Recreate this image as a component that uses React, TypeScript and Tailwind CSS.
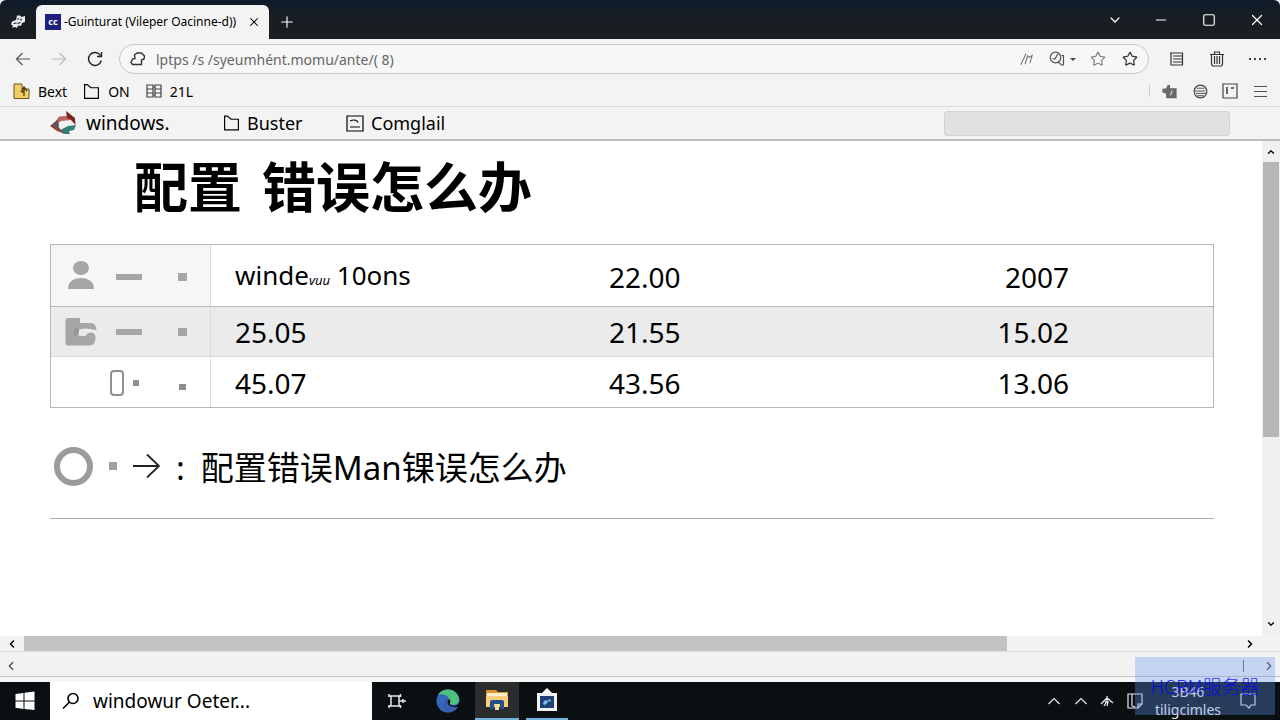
import type { ReactNode } from "react"
import { ChevronDown, ChevronLeft, ChevronRight, ChevronUp, Minus, Plus, Square, Star, X } from "lucide-react"

type GlyphProps = { className: string; box?: string; children: ReactNode }

function Glyph({ className, box = "0 0 16 16", children }: GlyphProps) {
  return (
    <svg className={className} viewBox={box} fill="none" stroke="currentColor" strokeWidth="1.2" aria-hidden="true">
      {children}
    </svg>
  )
}

function FolderOutline({ className }: { className: string }) {
  return (
    <Glyph className={className}>
      <path d="M1.500 14.500V1.500H4l3.500 3h7v10z" strokeWidth="1.100" />
    </Glyph>
  )
}

function TitleBar() {
  return (
    <header className="flex h-[39px] shrink-0 items-end rounded-t-md bg-gradient-to-b from-[#0d1a2a] via-[#1a1e24] to-[#1a1e23] text-white">
      <button className="flex h-[35px] w-9 items-center justify-center" aria-label="Tab actions">
        <svg className="h-4 w-4" viewBox="0 0 16 16" aria-hidden="true">
          <path d="M7 1.500h3l1.500 1.500L15 2v6l-3 1-1 3-3-.5-1 2.500-2-1-3 .5 1-2-2-1 1-3 4-1.500z" fill="#e8eaec" />
          <path d="M7 5h2M11 4.500v2M3.500 9.500l3-.5M7.500 9.500l3-1" stroke="#1a1e24" strokeWidth="1.200" />
        </svg>
      </button>
      <div className="flex h-[34px] w-[233px] items-center rounded-t-md bg-[#f3f3f3] pl-[9px] pr-2 text-black">
        <span className="flex h-4 w-4 shrink-0 items-center justify-center bg-[#1d1f7c] text-[9px] font-bold text-white">cc</span>
        <span className="ml-[3px] flex-1 whitespace-nowrap text-[12px]">-Guinturat (Vileper Oacinne-d))</span>
        <button aria-label="Close tab" className="flex w-[14px] justify-center">
          <X className="h-[14px] w-[14px]" strokeWidth={1.8} />
        </button>
      </div>
      <button aria-label="New tab" className="flex h-[35px] w-9 items-center justify-center">
        <Plus className="h-[18px] w-[18px]" strokeWidth={1.5} />
      </button>
      <div className="ml-auto flex h-[39px] items-center">
        <button aria-label="Search tabs" className="flex w-[46px] justify-center">
          <ChevronDown className="h-4 w-4" strokeWidth={1.8} />
        </button>
        <button aria-label="Minimize" className="flex w-[46px] justify-center">
          <Minus className="h-4 w-4" strokeWidth={1.8} />
        </button>
        <button aria-label="Maximize" className="flex w-[50px] justify-center">
          <Square className="h-[14px] w-[14px]" strokeWidth={2} />
        </button>
        <button aria-label="Close" className="flex w-[46px] justify-center">
          <X className="h-[18px] w-[18px]" strokeWidth={1.6} />
        </button>
      </div>
    </header>
  )
}

function AddressBar() {
  return (
    <div className="flex h-10 shrink-0 items-center pl-3 pr-[14px] text-[#333]">
      <button aria-label="Back" className="flex w-[22px] justify-center text-[#555]">
        <Glyph className="h-4 w-4">
          <path d="M15 8H1.500M7.500 2L1.500 8l6 6" />
        </Glyph>
      </button>
      <button aria-label="Forward" className="ml-[14px] flex w-[22px] justify-center text-[#bbb]">
        <Glyph className="h-4 w-4">
          <path d="M1 8h13.500M8.500 2l6 6-6 6" />
        </Glyph>
      </button>
      <button aria-label="Reload" className="ml-[14px] flex w-[22px] justify-center text-[#222]">
        <Glyph className="h-4 w-4">
          <path d="M13.500 4.500A6.500 6.500 0 1 0 14.300 9.500M14.500 1v4.500H10" strokeWidth="1.400" />
        </Glyph>
      </button>
      <div className="ml-[13px] flex h-[30px] flex-1 items-center rounded-full border border-[#c4c8c6] bg-[#f7f7f7] px-[10px]">
        <Glyph className="h-4 w-4 shrink-0">
          <path d="M2.500 8L5 7.500 4.500 4 7 2h4.500L14.500 5l-.5 3-2.500 1v4.500H2.500L1 11.500z" strokeWidth="1.400" />
        </Glyph>
        <input
          aria-label="Address"
          className="ml-[10px] w-0 flex-1 bg-transparent text-[14px] text-[#666] outline-none"
          defaultValue="lptps /s /syeumhént.momu/ante/( 8)"
        />
        <div className="flex items-center text-[#777]">
          <button aria-label="Read aloud" className="mr-4">
            <Glyph className="h-[14px] w-[14px]">
              <path d="M2 14.500L8 2M7 14L10 3.500M9.500 4l2 2L15 4l-2.500 9" />
            </Glyph>
          </button>
          <button aria-label="Zoom options" className="mr-[14px] flex items-center text-[#555]">
            <Glyph className="h-4 w-4">
              <circle cx="6.500" cy="6.500" r="5.300" />
              <path d="M3.500 7.500L6 8l3-5.500M12.500 4.500h2V14h-2L9 11" />
            </Glyph>
            <span className="ml-[5px] border-x-3 border-t-3 border-x-transparent border-t-[#444]" />
          </button>
          <button aria-label="Favorites list" className="mr-4">
            <Star className="h-4 w-4" strokeWidth={1.6} />
          </button>
          <button aria-label="Add to favorites" className="text-[#333]">
            <Star className="h-4 w-4" strokeWidth={1.8} />
          </button>
        </div>
      </div>
      <button aria-label="Reading list" className="ml-5">
        <Glyph className="h-4 w-4">
          <path d="M1 2h13M2 2v12h12M4 5h9M4 8h9M4 11h9M13.500 2v12" />
        </Glyph>
      </button>
      <button aria-label="Delete" className="ml-6">
        <Glyph className="h-4 w-4">
          <path d="M1 3.500h14M5.500 3V1h5v2M2.500 4v9l1 2h9l1-2V4M5.500 5v8M8 5v8M10.500 5v8" />
        </Glyph>
      </button>
      <button aria-label="Settings and more" className="ml-6 flex gap-[3px] py-2">
        {[0, 1, 2, 3].map((i) => (
          <span key={i} className="h-[2px] w-[2px] bg-[#444]" />
        ))}
      </button>
    </div>
  )
}

function BookmarksBar() {
  return (
    <div className="flex h-7 shrink-0 items-center border-b border-[#dcdcdc] pb-[3px] pl-[13px] pr-[13px] text-[14px] text-black">
      <a href="#bext" className="flex items-center">
        <svg className="mr-2 h-[17px] w-[17px]" viewBox="0 0 17 17" aria-hidden="true">
          <path d="M1 1h8v5h7v9.500H1z" fill="#f0cd66" stroke="#6b5620" />
          <path d="M8 9l3-5 3 4M11 4v9M9 9h2" stroke="#4a3a16" strokeWidth="1.300" fill="none" />
        </svg>
        Bext
      </a>
      <a href="#on" className="ml-4 flex items-center">
        <FolderOutline className="mr-2 h-[17px] w-[17px]" />
        ON
      </a>
      <a href="#zll" className="ml-4 flex items-center">
        <Glyph className="mr-2 h-4 w-4">
          <path d="M1 2h6v12H1zM9 2h6v12H9zM1 6h6M1 10h6M9 6h6M9 10h6M7 4h2M7 12h2" stroke="#444" />
        </Glyph>
        21L
      </a>
      <div className="ml-auto flex items-center text-[#444]">
        <span className="mr-3 h-3 w-px bg-[#ccc]" />
        <button aria-label="Extensions">
          <Glyph className="h-[15px] w-[15px]">
            <path d="M6 2l2-.5V5h7v9.500H5V10L1 8.500V5.500l4-.5z" fill="#6a6a6a" stroke="#6a6a6a" />
            <path d="M11 7l-2 5" stroke="#ddd" />
          </Glyph>
        </button>
        <button aria-label="Translate" className="ml-4">
          <Glyph className="h-[15px] w-[15px]">
            <circle cx="8" cy="8" r="6.800" />
            <path d="M4 4.500h8M2 7.500h11M3 10h11M4.500 12.500h7" strokeWidth="1" />
          </Glyph>
        </button>
        <button aria-label="Sidebar" className="ml-[14px]">
          <Glyph className="h-4 w-4">
            <path d="M1 1h14v14H1z" />
            <path d="M5 4v7M9 5h3" strokeWidth="1.600" />
          </Glyph>
        </button>
        <button aria-label="Menu" className="ml-4 flex w-[13px] flex-col gap-1">
          <span className="h-px bg-[#555]" />
          <span className="h-px bg-[#555]" />
          <span className="h-px bg-[#555]" />
        </button>
      </div>
    </div>
  )
}

function SiteNav() {
  return (
    <nav className="flex h-[34px] shrink-0 items-center border-b-2 border-[#bdbdbd] bg-[#f3f3f3] px-[50px] text-[18px] text-black">
      <a href="#windows" className="flex w-[173px] items-center gap-2 text-[19px]">
        <svg className="h-[25px] w-7" viewBox="0 0 28 25" aria-hidden="true">
          <path d="M6 10L9 5.500 17 5l4 4-10 1-5 4z" fill="#b8665f" />
          <path d="M16 0l9 7 .5 7-5-5.500L17 7z" fill="#7c2620" />
          <path d="M12 18l6-3 8-1-2 5-5 1 1 3-6 0-4-3z" fill="#347f78" />
          <path d="M0 15l7-6 1 6 3 4 4 4-8-3z" fill="#8b4740" />
          <path d="M4 12l4-2 1 5-3 3z" fill="#4f5a60" />
        </svg>
        windows.
      </a>
      <a href="#buster" className="flex w-[123px] items-center gap-[7px]">
        <FolderOutline className="h-[18px] w-[17px]" />
        Buster
      </a>
      <a href="#comglail" className="flex items-center gap-[7px]">
        <Glyph className="h-[17px] w-[18px]" box="0 0 18 17">
          <path d="M1 1h16v15H1zM4 6q2-1 4-1 3 0 4 2.500M4 12h10" />
        </Glyph>
        Comglail
      </a>
      <input aria-label="Site search" className="ml-auto h-[25px] w-[286px] rounded-[3px] border border-[#d2d2d2] bg-[#e1e1e1] px-2 outline-none" />
    </nav>
  )
}

const rows: { height: string; shade: string; headShade: string; icons: ReactNode; cells: ReactNode[] }[] = [
  {
    height: "h-[62px]",
    shade: "border-b border-b-[#b4b8b6] pt-[3px]",
    headShade: "bg-[#f6f6f6]",
    icons: (
      <div className="flex items-center pl-[14px]">
        <svg className="h-8 w-8" viewBox="0 0 32 32" fill="#a6a6a6" aria-hidden="true">
          <ellipse cx="16" cy="7" rx="8" ry="7" />
          <path d="M3 28c0-7 5-11 13-11s13 4 13 11z" />
        </svg>
        <span className="ml-[19px] h-[6px] w-[26px] bg-[#a6a6a6]" />
        <span className="ml-9 h-[8px] w-[9px] bg-[#a6a6a6]" />
      </div>
    ),
    cells: [
      <span className="text-[26px]">
        winde<i className="text-[13px]">vuu</i> 10ons
      </span>,
      "22.00",
      "2007",
    ],
  },
  {
    height: "h-[50px]",
    shade: "border-b border-b-[#d8d8d8] bg-[#ebebeb] pt-px",
    headShade: "bg-[#ebebeb]",
    icons: (
      <div className="flex items-center pl-[14px]">
        <svg className="h-8 w-8" viewBox="0 0 32 32" fill="#a6a6a6" aria-hidden="true">
          <path d="M3 2h12v5h11q5 0 5.500 7l-7-1q-2-1-9 0-3 1-3 4t4 3h4q2-4 6-3.500 4 .5 4 5 0 8-6 8H3q-2.500 0-2.500-2.500V4.500Q.5 2 3 2z" />
          <path d="M9 12v8l5-2v-5z" fill="#969696" />
        </svg>
        <span className="ml-[19px] h-[6px] w-[26px] bg-[#a6a6a6]" />
        <span className="ml-9 h-[8px] w-[9px] bg-[#a6a6a6]" />
      </div>
    ),
    cells: ["25.05", "21.55", "15.02"],
  },
  {
    height: "h-[50px]",
    shade: "pt-px",
    headShade: "",
    icons: (
      <div className="flex items-center pl-[59px]">
        <span className="h-[26px] w-[14px] rounded-[4px] border-2 border-[#8f8f8f]" />
        <span className="ml-[9px] h-[6px] w-[6px] bg-[#8f8f8f]" />
        <span className="ml-10 mt-2 h-[6px] w-[7px] bg-[#8f8f8f]" />
      </div>
    ),
    cells: ["45.07", "43.56", "13.06"],
  },
]

function DataTable() {
  return (
    <table className="w-full table-fixed border-separate border-spacing-0 border border-[#b4b8b6] text-[28px] leading-9">
      <colgroup>
        <col className="w-[160px]" />
        <col />
        <col />
        <col />
      </colgroup>
      <tbody>
        {rows.map((row, i) => (
          <tr key={i} className={row.height}>
            <th className={`border-r border-r-[#dcdcdc] px-0 pb-0 ${row.shade} ${row.headShade}`}>{row.icons}</th>
            <td className={`pb-0 pl-6 pr-0 ${row.shade}`}>{row.cells[0]}</td>
            <td className={`pb-0 pl-16 pr-0 ${row.shade}`}>{row.cells[1]}</td>
            <td className={`pb-0 pl-0 pr-36 text-right ${row.shade}`}>{row.cells[2]}</td>
          </tr>
        ))}
      </tbody>
    </table>
  )
}

function VerticalScrollbar() {
  return (
    <div className="flex w-[18px] shrink-0 flex-col items-center bg-[#f0f0f0]">
      <button aria-label="Scroll up" className="flex h-[21px] items-center">
        <ChevronUp className="h-[10px] w-[10px]" strokeWidth={3} />
      </button>
      <div className="w-4 flex-1">
        <div className="h-[61%] w-full bg-[#b6b8b7]" />
      </div>
      <button aria-label="Scroll down" className="flex h-6 items-center">
        <ChevronDown className="h-[10px] w-[10px]" strokeWidth={3} />
      </button>
    </div>
  )
}

function BottomBars() {
  return (
    <div className="shrink-0 bg-[#f2f2f2]">
      <div className="flex h-4 items-center border-b border-[#ddd] pr-[18px]">
        <button aria-label="Scroll left" className="flex w-6 justify-center">
          <ChevronLeft className="h-3 w-3" strokeWidth={3} />
        </button>
        <div className="h-full flex-1">
          <div className="h-full w-[81%] bg-[#c3c3c3]" />
        </div>
        <button aria-label="Scroll right" className="flex w-6 justify-center">
          <ChevronRight className="h-3 w-3" strokeWidth={3} />
        </button>
      </div>
      <div className="flex h-[25px] items-center border-b border-[#c4c4c4] px-1 pt-[3px] text-[#444]">
        <button aria-label="Previous">
          <ChevronLeft className="h-[14px] w-[14px]" strokeWidth={2} />
        </button>
        <span className="ml-auto mr-[18px] h-3 w-px bg-[#666]" />
        <button aria-label="Next">
          <ChevronRight className="h-[14px] w-[14px]" strokeWidth={2} />
        </button>
      </div>
      <div className="h-[5px] bg-[#f6f6f6]" />
    </div>
  )
}

function Taskbar() {
  return (
    <footer className="flex h-[38px] shrink-0 items-stretch bg-[#0a0f12] text-[#e8e8e8]">
      <button aria-label="Start" className="flex w-[50px] items-center justify-center">
        <svg className="h-5 w-5" viewBox="0 0 20 20" fill="#fff" aria-hidden="true">
          <path d="M.5 3L8.500 2v7.500h-8zM9.500 1.800L19.500.5v9h-10zM.5 10.500h8V18l-8-1.200zM9.500 10.500h10v8.500l-10-1z" />
        </svg>
      </button>
      <label className="flex w-[322px] items-center bg-white pl-3 text-black">
        <Glyph className="h-[18px] w-[18px]" box="0 0 18 18">
          <circle cx="11" cy="6.500" r="5" strokeWidth="1.600" />
          <path d="M7.500 10L1 16.500" strokeWidth="1.600" />
        </Glyph>
        <input aria-label="Search" className="ml-[13px] w-0 flex-1 bg-transparent text-[19px] outline-none" defaultValue="windowur Oeter..." />
      </label>
      <button aria-label="Task view" className="flex w-[50px] items-center justify-center">
        <Glyph className="h-[18px] w-[18px]" box="0 0 18 18">
          <path d="M3 4h8v10H3zM1 2v3M1 13v3M12.500 2v3M12.500 13v3M11 9h7M15 7v4M1 4h2M1 14h2M11 4h2M11 14h2" strokeWidth="1.500" />
        </Glyph>
      </button>
      <button aria-label="Edge" className="flex w-[51px] items-center justify-center">
        <svg className="h-6 w-6" viewBox="0 0 24 24" aria-hidden="true">
          <circle cx="12" cy="12" r="11.500" fill="#3568bd" />
          <path d="M2 6C6-1 17-1 21 5c5 7 0 13-7 10-3-1-1-2-1-4 0-5-7-7-11-5z" fill="#4cc27a" />
          <path d="M14 10c-2 1-4 3-2 6 2 3 7 3 10 1.500l1 3.500 1-8-3 3c-2 1-5 1-6.500 0-1.500-1 .5-3-.5-6z" fill="#0a0f12" />
          <path d="M10 22c-5-4-3-12 3-13-3 3-2 10 8 9-2 4-7 6-11 4z" fill="#3a5cae" />
        </svg>
      </button>
      <button aria-label="File Explorer" className="ml-[2px] flex w-11 items-center justify-center border-b-2 border-[#74b4dc] bg-[#2b2c2e]">
        <svg className="h-[22px] w-[22px]" viewBox="0 0 22 22" aria-hidden="true">
          <path d="M0 1h10l2 2h10v6H0z" fill="#d9962f" />
          <path d="M1 4h20v4H1z" fill="#fbeecb" />
          <path d="M0 7h22v11H0z" fill="#f5cf7c" />
          <path d="M4 20v-7q0-2 2-2h10q2 0 2 2v7h-4v-5H8v5z" fill="#234f8d" />
          <path d="M9 15h4v6H9z" fill="#f7dca0" />
        </svg>
      </button>
      <button aria-label="Store" className="ml-[7px] flex w-[42px] items-center justify-center border-b-2 border-[#74b4dc]">
        <svg className="h-6 w-[22px]" viewBox="0 0 22 24" aria-hidden="true">
          <path d="M6 5l5-5 5 5z" fill="#fff" />
          <path d="M1 5h20v18H1z" fill="#f3f1ef" />
          <path d="M4 8h14v12H4z" fill="#1e4276" />
          <path d="M8 13l3-1 1 2-3 3-2-1zM13 11l2 1-1 2-2-1z" fill="#7cc0f0" />
        </svg>
      </button>
      <div className="ml-auto flex items-center pr-6">
        <button aria-label="Show hidden icons" className="w-[27px]">
          <Glyph className="h-3 w-3" box="0 0 12 12">
            <path d="M.5 9L6 3.500 11.500 9" />
          </Glyph>
        </button>
        <button aria-label="Network" className="w-[25px]">
          <Glyph className="h-3 w-3" box="0 0 12 12">
            <path d="M.5 9L6 3.500 11.500 9" />
          </Glyph>
        </button>
        <button aria-label="Volume" className="w-[27px]">
          <Glyph className="h-[14px] w-[14px]" box="0 0 14 14">
            <path d="M1 10l6-6 6 5M7 2v5L4 12M5 8h3l-1 4" strokeWidth="1.300" />
          </Glyph>
        </button>
        <button aria-label="Tablet mode">
          <Glyph className="h-4 w-4">
            <path d="M1 1h14v10l-4 4H1zM5 1v12M11 15v-4h4M5 13l3 1" />
          </Glyph>
        </button>
        <div className="flex w-[97px] flex-col items-center pr-[7px] text-[14px] leading-[18px]">
          <span>3B46</span>
          <span>tiligcimles</span>
        </div>
        <button aria-label="Notifications">
          <Glyph className="h-4 w-4">
            <path d="M1 1h14v11h-4l-2 3-3-3H1z" />
          </Glyph>
        </button>
      </div>
    </footer>
  )
}

export default function App() {
  return (
    <div className="relative flex h-screen flex-col overflow-hidden bg-[#f3f3f3] font-['Noto_Sans','Noto_Sans_CJK_SC',sans-serif]">
      <TitleBar />
      <AddressBar />
      <BookmarksBar />
      <SiteNav />
      <div className="flex min-h-0 flex-1 bg-white text-black">
        <main className="min-w-0 flex-1 overflow-hidden pl-[50px] pr-12">
          <h1 className="flex gap-5 pl-[84px] pt-[6px] text-[54px] font-bold leading-[80px]">
            <span>配置</span>
            <span>错误怎么办</span>
          </h1>
          <div className="pt-[17px]">
            <DataTable />
          </div>
          <p className="mt-8 flex items-center border-b border-[#b0b0b0] pb-[26px] pl-1 text-[33px] leading-[49px]">
            <span className="h-[39px] w-[39px] rounded-full border-6 border-[#9b9b9b]" />
            <span className="ml-4 h-2 w-2 bg-[#a0a0a0]" />
            <Glyph className="ml-4 h-[26px] w-[27px] text-[#222]" box="0 0 27 26">
              <path d="M0 13h26M14 1.500L26 13 14 24.500" strokeWidth="1.800" />
            </Glyph>
            <span className="ml-4 pt-[3px]">:</span>
            <span className="ml-4 pt-[3px]">配置错误Man锞误怎么办</span>
          </p>
        </main>
        <VerticalScrollbar />
      </div>
      <BottomBars />
      <Taskbar />
      <div className="pointer-events-none absolute bottom-[5px] right-[5px] flex h-[58px] w-[140px] items-center justify-center bg-[#6495ed]/33 font-['Noto_Sans_CJK_SC',sans-serif] text-[19px] font-light text-[#0000ff]/80">
        HCRM服务器
      </div>
    </div>
  )
}
